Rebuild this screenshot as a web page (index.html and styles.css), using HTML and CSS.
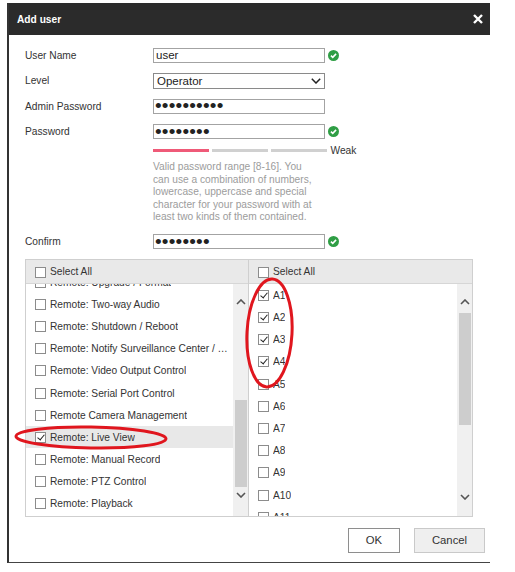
FILE: index.html
```html
<!DOCTYPE html>
<html lang="en">
<head>
    <meta charset="UTF-8">
    <meta name="viewport" content="width=device-width, initial-scale=1.0">
    <title>Add user</title>
    <link rel="stylesheet" href="styles.css">
</head>
<body>

    <div class="dialog">
        <div class="titlebar">
            <span class="title">Add user</span>
            <svg class="close" viewBox="0 0 10 10" width="10" height="10">
                <path d="M1 1 L9 9 M9 1 L1 9" stroke="#fff" stroke-width="2.4" fill="none"/>
            </svg>
        </div>

        <div class="content">
            <div class="row">
                <label for="user-name">User Name</label>
                <input class="field" id="user-name" type="text" value="user">
                <svg class="valid" viewBox="0 0 12 12"><circle cx="6" cy="6" r="6" fill="#2f9e45"/><path d="M3.2 6.1 L5.2 8 L8.8 4.2" stroke="#fff" stroke-width="1.7" fill="none"/></svg>
            </div>
            <div class="row">
                <label for="level">Level</label>
                <div class="select-wrap">
                    <select class="field" id="level">
                        <option>Operator</option>
                        <option>User</option>
                    </select>
                    <svg class="select-arrow" viewBox="0 0 10 6"><polyline points="0.8,0.8 5,5 9.2,0.8" stroke="#222" stroke-width="1.5" fill="none"/></svg>
                </div>
            </div>
            <div class="row">
                <label for="admin-pw">Admin Password</label>
                <input class="field pw" id="admin-pw" type="password" value="adminadmin">
            </div>
            <div class="row">
                <label for="pw">Password</label>
                <input class="field pw" id="pw" type="password" value="password">
                <svg class="valid" viewBox="0 0 12 12"><circle cx="6" cy="6" r="6" fill="#2f9e45"/><path d="M3.2 6.1 L5.2 8 L8.8 4.2" stroke="#fff" stroke-width="1.7" fill="none"/></svg>
            </div>

            <div class="strength">
                <span class="bar on"></span>
                <span class="bar"></span>
                <span class="bar"></span>
                <span class="weak">Weak</span>
            </div>
            <p class="hint">Valid password range [8-16]. You can use a combination of numbers, lowercase, uppercase and special character for your password with at least two kinds of them contained.</p>

            <div class="row confirm">
                <label for="confirm">Confirm</label>
                <input class="field pw" id="confirm" type="password" value="password">
                <svg class="valid" viewBox="0 0 12 12"><circle cx="6" cy="6" r="6" fill="#2f9e45"/><path d="M3.2 6.1 L5.2 8 L8.8 4.2" stroke="#fff" stroke-width="1.7" fill="none"/></svg>
            </div>

            <div class="lists">
                <div class="pane pane-left">
                    <div class="pane-head"><input type="checkbox">Select All</div>
                    <div class="pane-body">
                        <ul class="list">
                            <li class="item cut"><input type="checkbox"><span>Remote: Upgrade / Format</span></li>
                            <li class="item"><input type="checkbox"><span>Remote: Two-way Audio</span></li>
                            <li class="item"><input type="checkbox"><span>Remote: Shutdown / Reboot</span></li>
                            <li class="item"><input type="checkbox"><span>Remote: Notify Surveillance Center / Trigger Alarm Output</span></li>
                            <li class="item"><input type="checkbox"><span>Remote: Video Output Control</span></li>
                            <li class="item"><input type="checkbox"><span>Remote: Serial Port Control</span></li>
                            <li class="item"><input type="checkbox"><span>Remote Camera Management</span></li>
                            <li class="item active"><input type="checkbox" checked><span>Remote: Live View</span></li>
                            <li class="item"><input type="checkbox"><span>Remote: Manual Record</span></li>
                            <li class="item"><input type="checkbox"><span>Remote: PTZ Control</span></li>
                            <li class="item"><input type="checkbox"><span>Remote: Playback</span></li>
                        </ul>
                        <div class="sb sb-left">
                            <svg class="arrow" viewBox="0 0 10 6"><polyline points="1,5 5,1 9,5" stroke="#555" stroke-width="1.6" fill="none"/></svg>
                            <div class="thumb"></div>
                            <div class="track-rest"></div>
                            <svg class="arrow" viewBox="0 0 10 6"><polyline points="1,1 5,5 9,1" stroke="#555" stroke-width="1.6" fill="none"/></svg>
                        </div>
                    </div>
                </div>
                <div class="pane pane-right">
                    <div class="pane-head"><input type="checkbox">Select All</div>
                    <div class="pane-body">
                        <ul class="list">
                            <li class="item"><input type="checkbox" checked><span>A1</span></li>
                            <li class="item"><input type="checkbox" checked><span>A2</span></li>
                            <li class="item"><input type="checkbox" checked><span>A3</span></li>
                            <li class="item"><input type="checkbox" checked><span>A4</span></li>
                            <li class="item"><input type="checkbox"><span>A5</span></li>
                            <li class="item"><input type="checkbox"><span>A6</span></li>
                            <li class="item"><input type="checkbox"><span>A7</span></li>
                            <li class="item"><input type="checkbox"><span>A8</span></li>
                            <li class="item"><input type="checkbox"><span>A9</span></li>
                            <li class="item"><input type="checkbox"><span>A10</span></li>
                            <li class="item"><input type="checkbox"><span>A11</span></li>
                        </ul>
                        <div class="sb sb-right">
                            <svg class="arrow" viewBox="0 0 10 6"><polyline points="1,5 5,1 9,5" stroke="#555" stroke-width="1.6" fill="none"/></svg>
                            <div class="thumb"></div>
                            <div class="track-rest"></div>
                            <svg class="arrow" viewBox="0 0 10 6"><polyline points="1,1 5,5 9,1" stroke="#555" stroke-width="1.6" fill="none"/></svg>
                        </div>
                    </div>
                </div>
            </div>

            <div class="actions">
                <button class="btn btn-ok">OK</button>
                <button class="btn btn-cancel">Cancel</button>
            </div>
        </div>
    </div>

    <!-- red hand-drawn marks over the screenshot -->
    <svg class="marks" viewBox="0 0 515 572" width="515" height="572">
        <ellipse cx="91" cy="437.5" rx="75" ry="10.5" transform="rotate(1 91 437.5)" stroke="#e0161e" stroke-width="3" fill="none"/>
        <ellipse cx="269.5" cy="333" rx="22.5" ry="54" transform="rotate(3 269.5 333)" stroke="#e0161e" stroke-width="3" fill="none"/>
    </svg>

</body>
</html>
```

FILE: styles.css
```css
body {
    margin: 0;
    font-family: "Liberation Sans", Arial, sans-serif;
    font-size: 10.2px;
    color: #333;
    background: #fff;
    position: relative;
}

.dialog {
    margin: 3px 0 0 7px;
    width: 481px;
    border-left: 2px solid #333;
    border-bottom: 1px solid #444;
}

.titlebar {
    height: 32px;
    background: #2b2b2b;
    color: #fff;
    display: flex;
    align-items: center;
    justify-content: space-between;
    padding: 0 7px 0 8px;
}

.title {
    font-weight: bold;
}

.close {
    width: 10px;
    height: 10px;
}

.content {
    padding: 12.5px 5px 8.7px 16px;
}

.row {
    display: flex;
    align-items: center;
    height: 15px;
}

.row + .row {
    margin-top: 10.6px;
}

.row label {
    width: 128px;
    flex: none;
}

.field {
    width: 172px;
    height: 15px;
    box-sizing: border-box;
    margin: 0;
    border: 1px solid #a3a3a3;
    padding: 0 2px;
    font-family: "Liberation Sans", Arial, sans-serif;
    font-size: 11.5px;
    color: #222;
    background: #fff;
    outline: none;
}

.field.pw {
    font-size: 19px;
    padding: 0 1px;
    letter-spacing: 0.2px;
}

.select-wrap {
    position: relative;
    height: 16px;
}

select.field {
    appearance: none;
    -webkit-appearance: none;
    height: 16px;
    padding: 0 0 0 3px;
    border-color: #8a8a8a;
    border-radius: 0;
}

.select-arrow {
    position: absolute;
    right: 4px;
    top: 5px;
    width: 10px;
    height: 6px;
    pointer-events: none;
}

.valid {
    width: 11px;
    height: 11px;
    margin-left: 3px;
}

.strength {
    display: flex;
    align-items: center;
    gap: 3.5px;
    height: 12px;
    margin: 5.7px 0 0 128px;
}

.bar {
    width: 55.5px;
    height: 3px;
    background: #d0d0d0;
}

.bar.on {
    background: #ef5a78;
}

.weak {
    margin-left: 0.5px;
    color: #333;
}

.hint {
    margin: 4.3px 0 0 128px;
    width: 163px;
    line-height: 12.5px;
    color: #9c9c9c;
}

.row.confirm {
    margin-top: 10.5px;
}

.lists {
    display: flex;
    width: 446px;
    margin-top: 10px;
    border: 1px solid #cfcfcf;
}

.pane-left {
    width: 222px;
    border-right: 1px solid #cfcfcf;
}

.pane-right {
    width: 223px;
}

.pane-head {
    height: 23px;
    display: flex;
    align-items: center;
    padding-left: 9px;
    background: #e9e9e9;
    border-bottom: 1px solid #d6d6d6;
}

.pane-body {
    display: flex;
    height: 232px;
}

.list {
    flex: 1;
    min-width: 0;
    overflow: hidden;
    list-style: none;
    margin: 0;
    padding: 0;
    background: #fff;
}

.item {
    display: flex;
    align-items: center;
    height: 22.2px;
    padding: 0 3px 0 9px;
    white-space: nowrap;
}

.item span {
    overflow: hidden;
    text-overflow: ellipsis;
}

.item.cut {
    margin-top: -13.3px;
}

.item.active {
    background: #e8e8e8;
}

input[type="checkbox"] {
    appearance: none;
    -webkit-appearance: none;
    position: relative;
    flex: none;
    width: 11px;
    height: 11px;
    margin: 0 4px 0 0;
    border: 1px solid #8c8c8c;
    background: #fff;
}

.pane-head input[type="checkbox"] {
    margin-top: 1px;
}

input[type="checkbox"]:checked::after {
    content: "";
    position: absolute;
    left: 2.6px;
    top: 0;
    width: 3px;
    height: 6px;
    border: solid #222;
    border-width: 0 1.5px 1.5px 0;
    transform: rotate(40deg);
}

/* hand-drawn scrollbars */
.sb {
    width: 15px;
    flex: none;
    display: flex;
    flex-direction: column;
    align-items: center;
    background: #f0f0f0;
}

.sb .arrow {
    width: 10px;
    height: 6px;
    flex: none;
}

.sb .thumb {
    width: 12px;
    background: #cdcdcd;
    flex: none;
}

.sb .track-rest {
    flex: 1;
}

.sb-right .arrow:first-child {
    margin-top: 14.7px;
}

.sb-right .thumb {
    margin-top: 8px;
    height: 112px;
}

.sb-right .arrow:last-child {
    margin-bottom: 15.8px;
}

.sb-left .arrow:first-child {
    margin-top: 14.7px;
}

.sb-left .thumb {
    margin-top: 95px;
    height: 87px;
}

.sb-left .arrow:last-child {
    margin-bottom: 18.3px;
}

.actions {
    display: flex;
    justify-content: flex-end;
    gap: 14px;
    margin-top: 10.7px;
}

.btn {
    height: 25px;
    font-family: "Liberation Sans", Arial, sans-serif;
    font-size: 11.3px;
    color: #333;
    padding: 0;
    border-radius: 0;
}

.btn-ok {
    width: 52px;
    background: #fff;
    border: 1px solid #8e8e8e;
}

.btn-cancel {
    width: 71px;
    background: #efefef;
    border: 1px solid #c9c9c9;
}

.marks {
    position: absolute;
    left: 0;
    top: 0;
    pointer-events: none;
}
```
